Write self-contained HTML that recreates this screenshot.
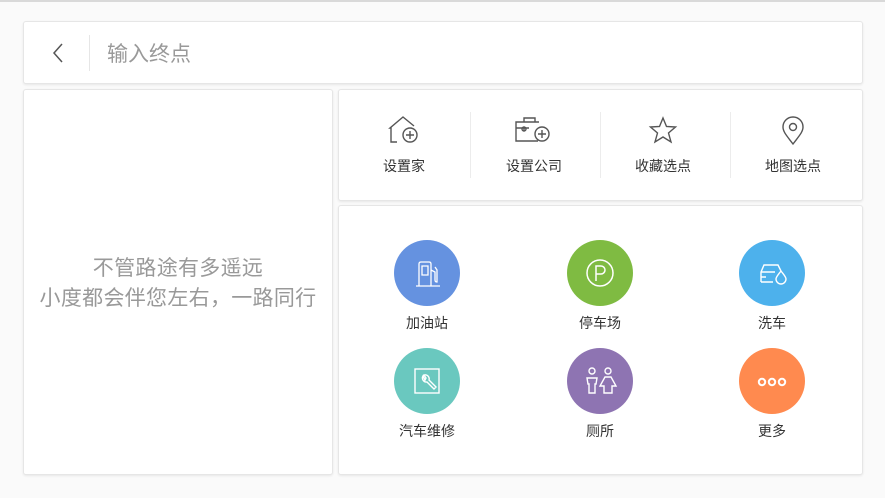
<!DOCTYPE html>
<html><head><meta charset="utf-8"><style>
*{margin:0;padding:0;box-sizing:border-box}
body{width:885px;height:498px;background:#fafafa;font-family:"Liberation Sans","Noto Sans CJK SC",sans-serif;position:relative;overflow:hidden}
.top{position:absolute;left:0;top:0;width:885px;height:2px;background:#d9d9d9}
.card{position:absolute;background:#fff;border:1px solid #e6e6e6;border-radius:3px;box-shadow:0 1px 2px rgba(0,0,0,.08)}
.lbl{position:absolute;font-size:14px;color:#333;text-align:center;width:120px}
.c{position:absolute;width:66px;height:66px;border-radius:50%}
.sep{position:absolute;top:22px;width:1px;height:66px;background:#ececec}
</style></head><body>
<div class="top"></div>
<div class="card" style="left:23px;top:21px;width:840px;height:63px">
 <svg style="position:absolute;left:27px;top:20px" width="14" height="22" viewBox="0 0 14 22"><path d="M11 2 L3 11 L11 20" fill="none" stroke="#555" stroke-width="1.5"/></svg>
 <div style="position:absolute;left:65px;top:13px;width:1px;height:36px;background:#e6e6e6"></div>
 <div style="position:absolute;left:83px;top:16px;font-size:21px;color:#999">输入终点</div>
</div>
<div class="card" style="left:23px;top:89px;width:310px;height:386px">
 <div style="position:absolute;left:0;top:164px;width:100%;text-align:center;font-size:21px;letter-spacing:0.3px;color:#999;line-height:30px">不管路途有多遥远<br>小度都会伴您左右，一路同行</div>
</div>
<div class="card" style="left:338px;top:89px;width:525px;height:112px">
 <div class="sep" style="left:131px"></div><div class="sep" style="left:261px"></div><div class="sep" style="left:391px"></div>
 <svg style="position:absolute;left:49px;top:24px" width="34" height="30" viewBox="0 0 34 30" fill="none" stroke="#555" stroke-width="1.4"><path d="M9 28 H3 V14 L2 14 L15 3 L26 12"/><circle cx="22" cy="21" r="7"/><path d="M22 17v8M18 21h8"/></svg>
 <svg style="position:absolute;left:175px;top:24px" width="38" height="30" viewBox="0 0 38 30" fill="none" stroke="#555" stroke-width="1.4"><path d="M10 8V4h11v4M24 27H2V8h23M2 14h13M10 14v3"/><circle cx="10" cy="15" r="2"/><circle cx="28" cy="20" r="7"/><path d="M28 16v8M24 20h8"/></svg>
 <svg style="position:absolute;left:307px;top:25px" width="34" height="30" viewBox="0 0 34 30" fill="none" stroke="#555" stroke-width="1.4"><path d="M17 3 L20.5 11.5 L29.5 12 L22.5 18 L25 27 L17 22 L9 27 L11.5 18 L4.5 12 L13.5 11.5 Z"/></svg>
 <svg style="position:absolute;left:439px;top:25px" width="30" height="32" viewBox="0 0 30 32" fill="none" stroke="#555" stroke-width="1.4"><path d="M15 29 C9 21 5 17 5 12 A10 10 0 0 1 25 12 C25 17 21 21 15 29Z"/><circle cx="15" cy="12" r="3.5"/></svg>
 <div class="lbl" style="left:5px;top:66px">设置家</div>
 <div class="lbl" style="left:135px;top:66px">设置公司</div>
 <div class="lbl" style="left:264px;top:66px">收藏选点</div>
 <div class="lbl" style="left:394px;top:66px">地图选点</div>
</div>
<div class="card" style="left:338px;top:205px;width:525px;height:270px">
 <div class="c" style="left:55px;top:34px;background:#6592e0"><svg width="66" height="66" viewBox="0 0 66 66" fill="none" stroke="#fff" stroke-width="1.3"><path d="M22 46h24M25 46V24q0-2 2-2h8q2 0 2 2v22M28 26h6v9h-6zM37 30l4 2v8q0 2 2 2v-12l-2-3"/></svg></div>
 <div class="c" style="left:228px;top:34px;background:#7fbb42"><svg width="66" height="66" viewBox="0 0 66 66" fill="none" stroke="#fff" stroke-width="1.5"><circle cx="33" cy="33" r="13"/><path d="M29 41V26h5a4 4 0 0 1 0 8h-5"/></svg></div>
 <div class="c" style="left:400px;top:34px;background:#4db1ec"><svg width="66" height="66" viewBox="0 0 66 66" fill="none" stroke="#fff" stroke-width="1.4"><path d="M22 42V32l3-7h14l3 6M22 32h14M22 42h12M22 37h5"/><path d="M42 31c-3 4-5 6-5 8a5 5 0 0 0 10 0c0-2-2-4-5-8z"/></svg></div>
 <div class="c" style="left:55px;top:142px;background:#6ac8bf"><svg width="66" height="66" viewBox="0 0 66 66" fill="none" stroke="#fff" stroke-width="1.4"><rect x="21" y="21" width="24" height="24"/><path d="M29 28a4 4 0 0 0 4 6l7 7 2-2-7-7a4 4 0 0 0-5-5l2 3-1 2z"/></svg></div>
 <div class="c" style="left:228px;top:142px;background:#8e74b2"><svg width="66" height="66" viewBox="0 0 66 66" fill="none" stroke="#fff" stroke-width="1.4"><circle cx="25" cy="23" r="3"/><circle cx="41" cy="23" r="3"/><path d="M20 30h10l-1 6h-1v9h-6v-9h-1zM38 29h6l5 9h-4v7h-8v-7h-4z"/></svg></div>
 <div class="c" style="left:400px;top:142px;background:#ff8a4f"><svg width="66" height="66" viewBox="0 0 66 66" fill="none" stroke="#fff" stroke-width="2"><circle cx="23" cy="34" r="3.2"/><circle cx="33" cy="34" r="3.2"/><circle cx="43" cy="34" r="3.2"/></svg></div>
 <div class="lbl" style="left:28px;top:107px">加油站</div>
 <div class="lbl" style="left:201px;top:107px">停车场</div>
 <div class="lbl" style="left:373px;top:107px">洗车</div>
 <div class="lbl" style="left:28px;top:215px">汽车维修</div>
 <div class="lbl" style="left:201px;top:215px">厕所</div>
 <div class="lbl" style="left:373px;top:215px">更多</div>
</div>
</body></html>
